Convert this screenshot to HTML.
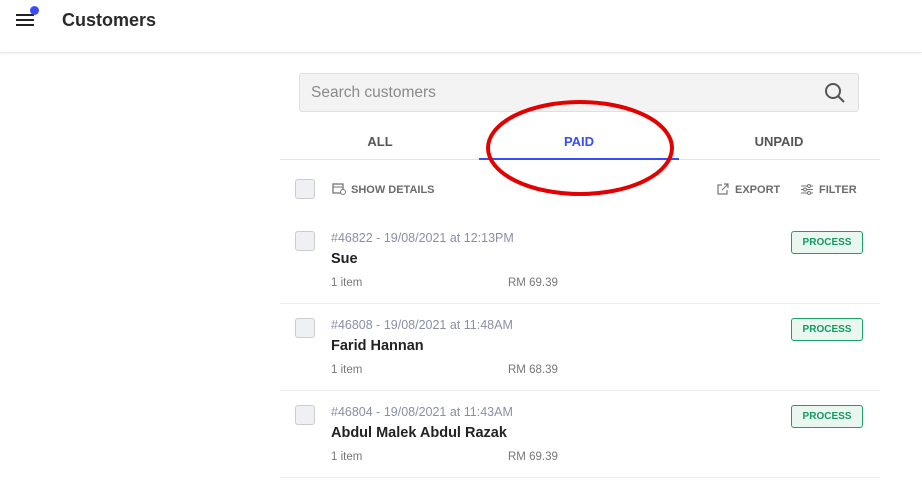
<!DOCTYPE html>
<html><head><style>
*{margin:0;padding:0;box-sizing:border-box}
body{width:922px;height:481px;background:#fff;font-family:"Liberation Sans",sans-serif;position:relative;overflow:hidden}
.hdr{position:absolute;left:0;top:0;width:922px;height:53px;border-bottom:1px solid #e8e8e8;box-shadow:0 1px 3px rgba(0,0,0,.06)}
.a{position:absolute}
.cb{position:absolute;left:295px;width:20px;height:20px;border:1px solid #ccc;border-radius:3px;background:#eef0f3}
.sm{font-size:12px;font-weight:bold;color:#6b6b6b}
.meta{font-size:12.5px;color:#8a8fa8}
.name{font-size:14.5px;font-weight:bold;color:#222}
.small{font-size:11.5px;color:#777}
.badge{position:absolute;left:791px;width:72px;height:23px;border:1px solid #1aa06b;border-radius:3px;background:#e9f7f0;color:#129a60;font-size:10px;font-weight:bold;text-align:center;line-height:21px}
.sep{position:absolute;left:280px;width:600px;height:1px;background:#ececec}
</style></head><body>
<div class="hdr"></div>
<div class="a" style="left:16px;top:14px;width:18px;height:2px;background:#222"></div>
<div class="a" style="left:16px;top:19px;width:18px;height:2px;background:#222"></div>
<div class="a" style="left:16px;top:24px;width:18px;height:2px;background:#222"></div>
<div class="a" style="left:30px;top:6px;width:9px;height:9px;border-radius:50%;background:#3a4cf5"></div>
<div class="a" style="left:62px;top:10px;font-size:18px;font-weight:bold;color:#2b2b2b">Customers</div>

<div class="a" style="left:299px;top:73px;width:560px;height:39px;background:#f3f3f3;border:1px solid #e0e0e0;border-radius:3px"></div>
<div class="a" style="left:311px;top:84px;font-size:15.5px;color:#8a8a8a">Search customers</div>
<svg class="a" style="left:824px;top:82px" width="22" height="22" viewBox="0 0 22 22"><circle cx="9" cy="9" r="7" fill="none" stroke="#555" stroke-width="2"/><line x1="14" y1="14" x2="20" y2="20" stroke="#555" stroke-width="2"/></svg>

<div class="a sm" style="left:280px;top:134px;width:200px;text-align:center;font-size:13px;color:#555">ALL</div>
<div class="a sm" style="left:479px;top:134px;width:200px;text-align:center;font-size:13px;color:#3a4cf5">PAID</div>
<div class="a sm" style="left:679px;top:134px;width:200px;text-align:center;font-size:13px;color:#555">UNPAID</div>
<div class="sep" style="top:159px;background:#e4e4e4"></div>
<div class="a" style="left:479px;top:158px;width:200px;height:2px;background:#3a4cf5"></div>
<svg class="a" style="left:478px;top:98px" width="200" height="100"><ellipse cx="102" cy="50" rx="92" ry="46" fill="none" stroke="#e30000" stroke-width="4"/></svg>

<div class="cb" style="top:179px"></div>
<svg class="a" style="left:332px;top:183px" width="14" height="12"><rect x="1" y="1" width="10" height="9" fill="none" stroke="#777" stroke-width="1.3"/><line x1="1" y1="4" x2="11" y2="4" stroke="#777"/><circle cx="11" cy="9" r="2.5" fill="#fff" stroke="#777"/></svg>
<div class="a sm" style="left:351px;top:184px;font-size:11px">SHOW DETAILS</div>
<svg class="a" style="left:717px;top:183px" width="12" height="12"><path d="M5 2H1v9h9V7M7 1h4v4M11 1L5 7" fill="none" stroke="#777" stroke-width="1.2"/></svg>
<div class="a sm" style="left:735px;top:184px;font-size:11px">EXPORT</div>
<svg class="a" style="left:801px;top:184px" width="13" height="11"><path d="M0 2h12M0 5.5h12M0 9h12" stroke="#777"/><circle cx="8" cy="2" r="1.5" fill="#fff" stroke="#777"/><circle cx="4" cy="5.5" r="1.5" fill="#fff" stroke="#777"/><circle cx="8" cy="9" r="1.5" fill="#fff" stroke="#777"/></svg>
<div class="a sm" style="left:819px;top:184px;font-size:11px">FILTER</div>

<div class="cb" style="top:231px"></div>
<div class="a meta" style="left:331px;top:231px">#46822 - 19/08/2021 at 12:13PM</div>
<div class="a name" style="left:331px;top:251px">Sue</div>
<div class="a small" style="left:331px;top:277px">1 item</div>
<div class="a small" style="left:508px;top:277px">RM 69.39</div>
<div class="badge" style="top:231px">PROCESS</div>
<div class="sep" style="top:303px"></div>

<div class="cb" style="top:318px"></div>
<div class="a meta" style="left:331px;top:318px">#46808 - 19/08/2021 at 11:48AM</div>
<div class="a name" style="left:331px;top:338px">Farid Hannan</div>
<div class="a small" style="left:331px;top:364px">1 item</div>
<div class="a small" style="left:508px;top:364px">RM 68.39</div>
<div class="badge" style="top:318px">PROCESS</div>
<div class="sep" style="top:390px"></div>

<div class="cb" style="top:405px"></div>
<div class="a meta" style="left:331px;top:405px">#46804 - 19/08/2021 at 11:43AM</div>
<div class="a name" style="left:331px;top:425px">Abdul Malek Abdul Razak</div>
<div class="a small" style="left:331px;top:451px">1 item</div>
<div class="a small" style="left:508px;top:451px">RM 69.39</div>
<div class="badge" style="top:405px">PROCESS</div>
<div class="sep" style="top:477px"></div>
</body></html>
